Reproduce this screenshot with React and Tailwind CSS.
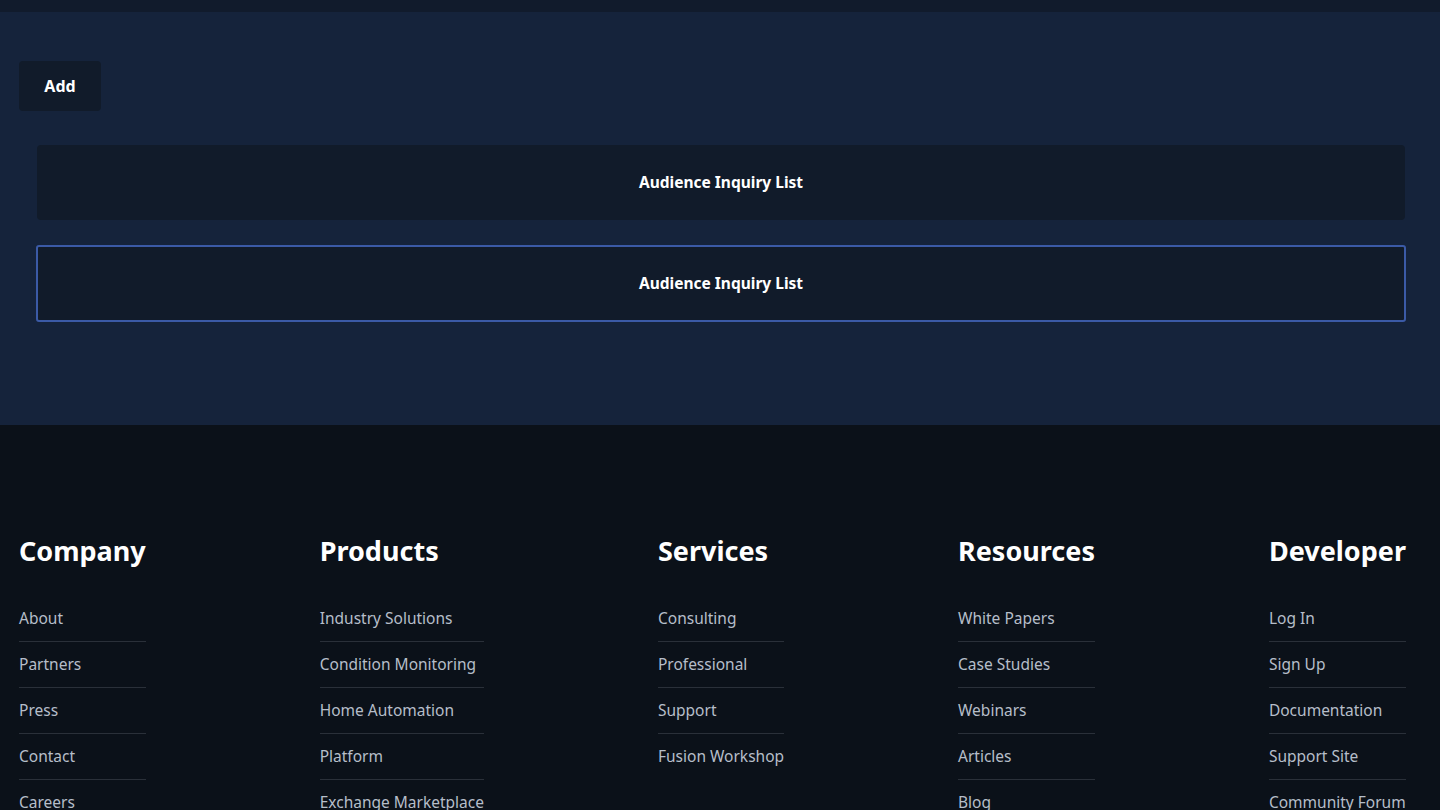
export default function App() {
  const cols = [
    { title: "Company", links: ["About", "Partners", "Press", "Contact", "Careers"] },
    { title: "Products", links: ["Industry Solutions", "Condition Monitoring", "Home Automation", "Platform", "Exchange Marketplace"] },
    { title: "Services", links: ["Consulting", "Professional", "Support", "Fusion Workshop"] },
    { title: "Resources", links: ["White Papers", "Case Studies", "Webinars", "Articles", "Blog"] },
    { title: "Developer", links: ["Log In", "Sign Up", "Documentation", "Support Site", "Community Forum"] },
  ];
  return (
    <div className="min-h-[810px] bg-[#0b1119] text-white" style={{ fontFamily: '"Noto Sans", "Open Sans", sans-serif' }}>
      <div className="h-[12px] bg-[#111b2c]" />
      <section className="bg-[#15233b] pt-[49px] pb-[104px] pl-[19px] pr-[35px]">
        <button className="h-[50px] w-[82px] rounded-[4px] bg-[#111b2a] text-[16px] font-bold text-white">Add</button>
        <div className="ml-[18px] mt-[34px] flex flex-col gap-[26px]">
          <div className="flex h-[75px] items-center justify-center rounded-[4px] bg-[#111b2a] text-[15.5px] font-bold">Audience Inquiry List</div>
          <div className="flex h-[75px] items-center justify-center rounded-[2px] bg-[#111b2a] text-[15.5px] font-bold outline-2 outline-offset-[-1px] outline-[#3b5aa6]">Audience Inquiry List</div>
        </div>
      </section>
      <footer className="flex justify-between pt-[108px] pl-[19px] pr-[34px]">
        {cols.map((c) => (
          <div key={c.title} className="flex flex-col">
            <h3 className="text-[27px] font-bold leading-[36px] text-white">{c.title}</h3>
            <ul className="mt-[27px]">
              {c.links.map((l, i) => (
                <li key={l} className={"flex h-[46px] items-center text-[15.5px] text-[#b6bec9] " + (i < c.links.length - 1 ? "border-b border-[#2a3039]" : "")}>
                  {l}
                </li>
              ))}
            </ul>
          </div>
        ))}
      </footer>
    </div>
  );
}
